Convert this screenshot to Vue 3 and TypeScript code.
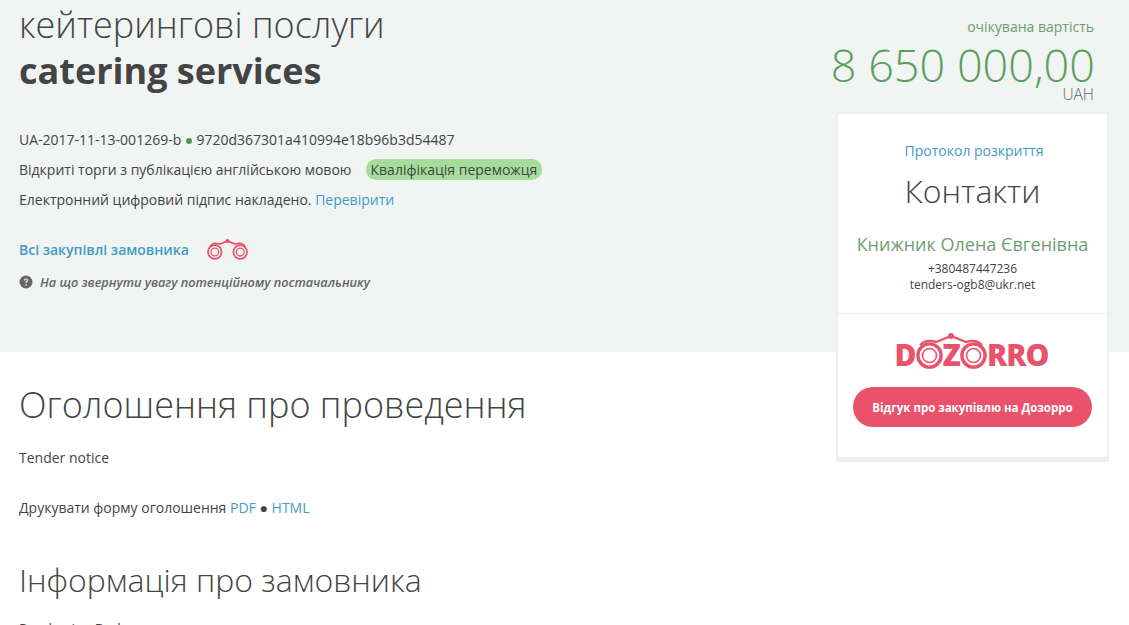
<script setup lang="ts">
const tender = {
  titleUk: 'кейтерингові послуги',
  titleEn: 'catering services',
  id: 'UA-2017-11-13-001269-b',
  hash: '9720d367301a410994e18b96b3d54487',
  amount: '8 650 000,00',
}
</script>

<template>
  <div class="page">
    <header class="hero">
      <div class="hero-main">
        <h1 class="title"><span>{{ tender.titleUk }}</span><b>{{ tender.titleEn }}</b></h1>
        <p class="line ids">{{ tender.id }} <i class="dot"></i> {{ tender.hash }}</p>
        <p class="line">
          Відкриті торги з публікацією англійською мовою
          <span class="status">Кваліфікація переможця</span>
        </p>
        <p class="line">Електронний цифровий підпис накладено. <a href="#">Перевірити</a></p>
        <div class="buyer-link">
          <a href="#">Всі закупівлі замовника</a>
          <svg class="binoculars" viewBox="0 0 41 22" width="41" height="22" fill="none" stroke="#e8536b">
            <circle cx="7.8" cy="14" r="6.8" stroke-width="1.7" />
            <circle cx="7.8" cy="14" r="3.9" stroke-width="1.3" />
            <circle cx="33.2" cy="14" r="6.8" stroke-width="1.7" />
            <circle cx="33.2" cy="14" r="3.9" stroke-width="1.3" />
            <path d="M2.5 9.5 C4 6 8 4.5 13 6 L20.5 3 L28 6 C33 4.5 37 6 38.5 9.5" stroke-width="1.7" />
            <circle cx="20.5" cy="3" r="2" fill="#e8536b" stroke="none" />
          </svg>
        </div>
        <p class="hint">
          <svg viewBox="0 0 14 14" width="14" height="14">
            <circle cx="7" cy="7" r="6.5" fill="#666" />
            <path d="M4.9 5.4c0-1.2 1-1.9 2.1-1.9s2.1.7 2.1 1.8c0 1.5-1.7 1.5-1.7 2.7H6.3c0-1.8 1.6-1.8 1.6-2.7 0-.5-.4-.8-.9-.8s-1 .3-1 .9z" fill="#f0f4f2" />
            <rect x="6.3" y="9.2" width="1.3" height="1.4" fill="#f0f4f2" />
          </svg>
          <em>На що звернути увагу потенційному постачальнику</em>
        </p>
      </div>

      <aside class="hero-side">
        <div class="price-label">очікувана вартість</div>
        <div class="price">{{ tender.amount }}</div>
        <div class="currency">UAH</div>

        <div class="card">
          <section class="contacts">
            <a href="#" class="protocol">Протокол розкриття</a>
            <h2>Контакти</h2>
            <div class="person">Книжник Олена Євгенівна</div>
            <div class="small">+380487447236</div>
            <div class="small">tenders-ogb8@ukr.net</div>
          </section>
          <section class="dozorro">
            <div class="logo">
              <span>D</span>
              <svg class="ring" viewBox="0 0 27 27" width="27" height="27" fill="none" stroke="#e8536b">
                <circle cx="13.5" cy="13.5" r="11.6" stroke-width="3.4" />
                <circle cx="13.5" cy="13.5" r="7" stroke-width="1.6" />
              </svg>
              <span>Z</span>
              <svg class="ring" viewBox="0 0 27 27" width="27" height="27" fill="none" stroke="#e8536b">
                <circle cx="13.5" cy="13.5" r="11.6" stroke-width="3.4" />
                <circle cx="13.5" cy="13.5" r="7" stroke-width="1.6" />
              </svg>
              <span>RRO</span>
              <svg class="bridge" viewBox="0 0 90 14" width="90" height="14" fill="none" stroke="#e8536b" stroke-width="2.4">
                <path d="M14 13 C18 9 24 8 30 10 L45 4 L60 10 C66 8 72 9 76 13" />
                <circle cx="45" cy="4" r="3" fill="#e8536b" stroke="none" />
              </svg>
            </div>
            <button type="button">Відгук про закупівлю на Дозорро</button>
          </section>
        </div>
      </aside>
    </header>

    <main class="content">
      <h2 class="section-title">Оголошення про проведення</h2>
      <p class="text">Tender notice</p>
      <p class="text print">Друкувати форму оголошення <a href="#">PDF</a> ● <a href="#">HTML</a></p>
      <h2 class="section-title second">Інформація про замовника</h2>
      <p class="text">Purchasing Body</p>
    </main>
  </div>
</template>

<style>
html,
body {
  margin: 0;
  height: 625px;
  overflow: hidden;
  background: #fff;
}
</style>

<style scoped>
.page {
  font-family: 'Open Sans', 'Noto Sans', sans-serif;
  font-size: 14px;
  color: #444;
}

a {
  color: #429bc9;
  text-decoration: none;
}

.hero {
  height: 352px;
  box-sizing: border-box;
  background: #f0f4f2;
  padding: 0 20px 0 19px;
  display: flex;
  justify-content: space-between;
}

.title {
  margin: 2px 0 36px;
  font-size: 36px;
  line-height: 46px;
  font-weight: 300;
  color: #444;
}

.title span,
.title b {
  display: block;
}

.title b {
  font-weight: 700;
}

.line {
  margin: 0 0 10px;
  line-height: 20px;
}

.dot {
  display: inline-block;
  width: 6px;
  height: 6px;
  margin: 0 1px 1px;
  border-radius: 50%;
  background: #4e9a4f;
}

.status {
  margin-left: 11px;
  padding: 1px 4.5px;
  border-radius: 10px;
  background: #a5dd9b;
}

.buyer-link {
  margin-top: 28px;
  display: flex;
  align-items: center;
  gap: 18px;
  font-weight: 600;
}

.hint {
  margin: 13px 0 0;
  display: flex;
  align-items: center;
  gap: 7px;
  font-size: 12.7px;
  font-weight: 600;
  color: #666;
}

.hero-side {
  width: 273px;
  text-align: right;
}

.price-label {
  margin-top: 17px;
  padding-right: 15px;
  line-height: 20px;
  color: #6f9e6f;
}

.price {
  margin: 5px 14px 0 -20px;
  white-space: nowrap;
  font-size: 45px;
  line-height: 46px;
  font-weight: 300;
  color: #5c9e5c;
}

.currency {
  margin-top: -1px;
  padding-right: 15px;
  font-size: 15.5px;
  line-height: 14px;
  font-weight: 300;
  color: #666;
}

.card {
  margin-top: 11px;
  background: #fff;
  text-align: center;
  border: 2px solid #edf0ee;
  border-bottom-width: 5px;
  box-sizing: border-box;
  height: 350px;
}

.contacts {
  height: 200px;
  box-sizing: border-box;
  padding-top: 27px;
  border-bottom: 1px solid #eceeec;
}

.protocol {
  display: block;
  margin-left: 3px;
  line-height: 20px;
}

.contacts h2 {
  margin: 8px 0 19px;
  font-size: 32px;
  line-height: 44px;
  font-weight: 300;
  color: #444;
}

.person {
  margin-bottom: 5px;
  font-size: 18px;
  line-height: 24px;
  color: #6f9e6f;
}

.small {
  font-size: 12px;
  line-height: 16px;
}

.dozorro {
  padding-top: 22px;
}

.logo {
  position: relative;
  display: inline-flex;
  align-items: center;
  height: 38px;
  margin-right: 2px;
  font-size: 30px;
  font-weight: 800;
  letter-spacing: -1px;
  line-height: 1;
  color: #e8536b;
}

.bridge {
  position: absolute;
  left: 11px;
  top: -4px;
}

.dozorro button {
  display: block;
  margin: 13px auto 0;
  width: 239px;
  height: 40px;
  border: none;
  border-radius: 20px;
  background: #e8536b;
  color: #fff;
  font-family: inherit;
  font-size: 11.5px;
  font-weight: 700;
}

.content {
  padding: 0 19px;
}

.section-title {
  margin: 28px 0 18px;
  font-size: 36px;
  line-height: 50px;
  font-weight: 300;
  color: #444;
}

.section-title.second {
  margin: 40px 0 17px;
  font-size: 32px;
  line-height: 44px;
}

.text {
  margin: 0;
  line-height: 20px;
}

.print {
  margin-top: 30px;
}
</style>
